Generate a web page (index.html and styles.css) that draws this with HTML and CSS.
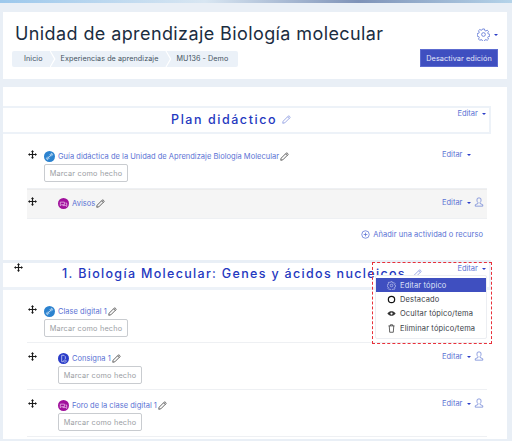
FILE: index.html
```html
<!DOCTYPE html>
<html lang="es">
<head>
  <meta charset="UTF-8" />
  <title>Unidad de aprendizaje Biología molecular</title>
  <link rel="stylesheet" href="styles.css">
</head>
<body>
  <svg class="sprites" width="0" height="0">
    <symbol id="move" viewBox="0 0 12 12"><path d="M6 0 8 2.500H6.800V5.200H9.500V4L12 6 9.500 8V6.800H6.800V9.500H8L6 12 4 9.500H5.200V6.800H2.500V8L0 6 2.500 4V5.200H5.200V2.500H4Z" fill="#1a1a1a"/></symbol>
    <symbol id="pencil" viewBox="0 0 12 12"><path d="M1.500 8.300 8.300 1.500a1 1 0 0 1 1.400 0l.8.8a1 1 0 0 1 0 1.400L3.700 10.500 1 11Z M7.500 2.500l2 2" fill="none" stroke="currentColor" stroke-width="1"/></symbol>
    <symbol id="user" viewBox="0 0 12 12"><path d="M6 1a2.500 2.500 0 0 0-2.500 2.800c0 1.300.6 2.300 1.300 3v1L1.500 9.300V11h9V9.300L7.200 7.800v-1c.7-.7 1.300-1.700 1.300-3A2.500 2.500 0 0 0 6 1Z" fill="none" stroke="#6d82d6" stroke-width=".9"/></symbol>
    <symbol id="gear" viewBox="0 0 16 16"><g fill="none" stroke="currentColor" stroke-width="1"><circle cx="8" cy="8" r="2.300"/><path d="M6.800 1.200h2.400l.4 1.900 1.300.6 1.700-1 1.600 1.700-1 1.600.6 1.300 1.900.5v2.400l-1.900.4-.6 1.300 1 1.700-1.700 1.600-1.600-1-1.300.6-.5 1.900H6.800l-.4-1.900-1.300-.6-1.700 1-1.600-1.700 1-1.600-.6-1.300-1.900-.5V6.800l1.900-.4.600-1.300-1-1.700 1.700-1.600 1.600 1 1.300-.6Z"/></g></symbol>
    <symbol id="link" viewBox="0 0 12 12"><circle cx="6" cy="6" r="6" fill="#2b82cf"/><path d="M3.500 8.500 8.500 3.500M4.500 6 3 7.500a1 1 0 0 0 1.500 1.500L6 7.500M6 4.500 7.500 3A1 1 0 0 1 9 4.500L7.500 6" fill="none" stroke="#cfe4f7" stroke-width=".9"/></symbol>
    <symbol id="forum" viewBox="0 0 12 12"><circle cx="6" cy="6" r="6" fill="#a0109c"/><path d="M2.500 4.500h4.500v2.800H4L2.500 8.500ZM5 8.300h3.500l1 .9V5.500H8" fill="none" stroke="#f0c9ef" stroke-width=".8"/></symbol>
    <symbol id="assign" viewBox="0 0 12 12"><circle cx="6" cy="6" r="6" fill="#2a3cc8"/><path d="M4 2.500h2.500L8 4v2.500M4 2.500v7h2M7.500 7.500a1.300 1.300 0 1 0 .1 0Z" fill="none" stroke="#d3d8f7" stroke-width=".8"/></symbol>
  </svg>

  <div class="top-strip"></div>

  <header class="page-header">
    <div class="header-left">
      <h1>Unidad de aprendizaje Biología molecular</h1>
      <ol class="crumbs">
        <li>Inicio</li>
        <li>Experiencias de aprendizaje</li>
        <li>MU136 - Demo</li>
      </ol>
    </div>
    <div class="header-right">
      <div class="gear-menu"><svg class="ico-gear"><use href="#gear"/></svg><i class="caret"></i></div>
      <button class="btn-edit">Desactivar edición</button>
    </div>
  </header>

  <main class="course">
    <section class="topic topic-first">
      <div class="topic-head">
        <h2>Plan didáctico <svg class="ico-pen-title"><use href="#pencil"/></svg></h2>
        <a class="edit-link">Editar <i class="caret"></i></a>
      </div>
      <ul class="activities">
        <li class="activity activity-top">
          <svg class="ico-move"><use href="#move"/></svg>
          <div class="activity-body">
            <div class="activity-name"><svg class="ico-mod"><use href="#link"/></svg><a>Guía didáctica de la Unidad de Aprendizaje Biología Molecular</a><svg class="ico-pen"><use href="#pencil"/></svg></div>
            <button class="btn-done">Marcar como hecho</button>
          </div>
          <a class="edit-link">Editar <i class="caret"></i></a>
        </li>
        <li class="activity activity-indent activity-grey">
          <svg class="ico-move"><use href="#move"/></svg>
          <div class="activity-body">
            <div class="activity-name"><svg class="ico-mod"><use href="#forum"/></svg><a>Avisos</a><svg class="ico-pen"><use href="#pencil"/></svg></div>
          </div>
          <a class="edit-link">Editar <i class="caret"></i><svg class="ico-user"><use href="#user"/></svg></a>
        </li>
      </ul>
      <a class="add-link"><svg class="ico-add" viewBox="0 0 12 12"><circle cx="6" cy="6" r="5" fill="none" stroke="#5a72d4"/><path d="M6 3.500v5M3.500 6h5" stroke="#5a72d4"/></svg>Añadir una actividad o recurso</a>
    </section>

    <section class="topic topic-second">
      <svg class="ico-move ico-move-topic"><use href="#move"/></svg>
      <div class="topic-head topic-head-second">
        <h2>1. Biología Molecular: Genes y ácidos nucleicos <svg class="ico-pen-title"><use href="#pencil"/></svg></h2>
        <a class="edit-link">Editar <i class="caret"></i></a>
      </div>
      <ul class="activities">
        <li class="activity">
          <svg class="ico-move"><use href="#move"/></svg>
          <div class="activity-body">
            <div class="activity-name"><svg class="ico-mod"><use href="#link"/></svg><a>Clase digital 1</a><svg class="ico-pen"><use href="#pencil"/></svg></div>
            <button class="btn-done">Marcar como hecho</button>
          </div>
        </li>
        <li class="activity activity-indent">
          <svg class="ico-move"><use href="#move"/></svg>
          <div class="activity-body">
            <div class="activity-name"><svg class="ico-mod"><use href="#assign"/></svg><a>Consigna 1</a><svg class="ico-pen"><use href="#pencil"/></svg></div>
            <button class="btn-done">Marcar como hecho</button>
          </div>
          <a class="edit-link">Editar <i class="caret"></i><svg class="ico-user"><use href="#user"/></svg></a>
        </li>
        <li class="activity activity-indent">
          <svg class="ico-move"><use href="#move"/></svg>
          <div class="activity-body">
            <div class="activity-name"><svg class="ico-mod"><use href="#forum"/></svg><a>Foro de la clase digital 1</a><svg class="ico-pen"><use href="#pencil"/></svg></div>
            <button class="btn-done">Marcar como hecho</button>
          </div>
          <a class="edit-link">Editar <i class="caret"></i><svg class="ico-user"><use href="#user"/></svg></a>
        </li>
      </ul>

      <div class="highlight-box"></div>
      <ul class="topic-menu">
        <li class="active"><svg class="ico-menu"><use href="#gear"/></svg>Editar tópico</li>
        <li><svg class="ico-menu" viewBox="0 0 12 12"><circle cx="6" cy="6" r="4.200" fill="none" stroke="#111" stroke-width="1.600"/></svg>Destacado</li>
        <li><svg class="ico-menu" viewBox="0 0 12 12"><path d="M.5 6C2 3.800 4 3 6 3s4 .8 5.500 3C10 8.200 8 9 6 9S2 8.200.5 6Z" fill="#333"/><circle cx="6" cy="6" r="1.500" fill="#fff"/></svg>Ocultar tópico/tema</li>
        <li><svg class="ico-menu" viewBox="0 0 12 12"><path d="M2 2.500h8M4.500 2.500V1h3v1.500M3 2.500l.6 8.500h4.800L9 2.500" fill="none" stroke="#333"/></svg>Eliminar tópico/tema</li>
      </ul>
    </section>
  </main>
</body>
</html>
```

FILE: styles.css
```css
html, body {
  margin: 0; padding: 0; height: 441px; overflow: hidden;
  background: #e9eff6; color: #1d2b3a;
  font-family: 'Inter', 'Liberation Sans', sans-serif;
}
ul, ol { list-style: none; margin: 0; padding: 0; }
a { color: #5a72d4; }
.sprites { position: absolute; }
.top-strip {
  height: 3px;
  background: linear-gradient(90deg, #9cc8ec, #d8e6f2 40%, #7f93b8 70%, #b5d4ea);
}

/* cabecera */
.page-header {
  display: flex; justify-content: space-between;
  height: 67px; margin: 9px 5px 8px 3px; padding: 0 9px;
  box-sizing: border-box; background: #fff;
}
h1 {
  margin: 11px 0 0 3px; font-size: 18px; line-height: 22px;
  font-weight: 400; letter-spacing: .4px; color: #1b2d3f; white-space: nowrap;
}
.crumbs {
  display: flex; margin-top: 6px; height: 16px; width: 226px;
  background: #ebf1f8; border-radius: 2px;
  font-size: 7.200px; line-height: 16px; color: #44525f;
}
.crumbs li { position: relative; padding-right: 18px; letter-spacing: .08px; }
.crumbs li:first-child { padding-left: 12px; }
.crumbs li:last-child { padding-right: 0; }
.crumbs li:not(:last-child)::after {
  content: ""; position: absolute; top: 0; right: 5px; width: 6px; height: 16px;
  background: #fff;
  clip-path: polygon(0 0, 20% 0, 100% 50%, 20% 100%, 0 100%, 75% 50%);
}
.header-right { display: flex; flex-direction: column; align-items: flex-end; flex: none; }
.gear-menu { display: flex; align-items: center; gap: 4px; margin-top: 16px; height: 13px; color: #5a72d4; }
.ico-gear { width: 13px; height: 13px; }
.btn-edit {
  width: 78px; height: 18px; margin-top: 8px; padding: 0;
  background: #3f4fc0; border: 1px solid #5c6bd0; color: #e6e9fa;
  font: 7.300px 'Inter', sans-serif; letter-spacing: .1px;
}
.caret {
  display: inline-block; width: 0; height: 0; vertical-align: 1px;
  border: 2.500px solid transparent; border-top-color: #2a3cc8; border-bottom: 0;
}

/* contenido */
.course {
  margin: 0 5px 0 3px; padding-top: 19px; height: 352px;
  box-sizing: border-box; background: #fff; position: relative;
}
.topic-head {
  position: relative; height: 28px; box-sizing: border-box;
  margin-right: 16px; border: 2px solid #edf2f8; border-left: 0;
  text-align: center;
}
h2 {
  margin: 0; padding-right: 30px; font-size: 12.500px; line-height: 24px;
  font-weight: 500; color: #2438c0; letter-spacing: 1.550px; white-space: nowrap;
}
.ico-pen-title { width: 9px; height: 9px; color: #7d8fdd; margin-left: 0; }
.topic-head .edit-link { position: absolute; top: 1px; right: 3px; }
.edit-link { font-size: 7.500px; line-height: 10px; white-space: nowrap; }
.edit-link .caret { margin-left: 2px; }
.ico-user { width: 10px; height: 10px; margin-left: 3px; vertical-align: -2px; }

.activities { margin: 0 20px 0 24px; }
.activity {
  display: flex; align-items: flex-start; box-sizing: border-box;
  height: 47px; padding-top: 9px; border-bottom: 1px solid #eef0f3;
}
.activity .edit-link { flex: none; width: 45px; margin: -1px 0 0 auto; }
.activity-top { height: 55px; padding-top: 16px; }
.activity-top .btn-done { margin-top: 2px; }
.activity-top .edit-link { margin-top: 0; }
.ico-move { width: 9px; height: 9px; margin: 0 7px 0 1px; flex: none; }
.activity-indent .ico-move { margin-right: 21px; }
.activity-grey { height: 30px; padding-top: 7px; background: #f5f5f5; border-top: 1px solid #ececec; }
.activity-grey .edit-link { margin-top: 0; }
.activity-name {
  display: flex; align-items: center; height: 12px;
  font-size: 7.500px; letter-spacing: .02px; white-space: nowrap;
}
.ico-mod { width: 11px; height: 11px; margin-right: 3px; flex: none; }
.ico-pen { width: 9px; height: 9px; margin-left: 1px; color: #333; flex: none; }
.btn-done {
  display: block; width: 84px; height: 18px; margin-top: 2px; padding: 0;
  background: #fff; border: 1px solid #c9ccd0; border-radius: 2px;
  color: #9a9ea3; font: 7.300px 'Inter', sans-serif; letter-spacing: .2px;
}

.add-link {
  display: block; margin: 10px 24px 0 0; text-align: right;
  font-size: 7.500px; line-height: 12px; letter-spacing: .05px;
}
.ico-add { width: 9px; height: 9px; margin-right: 3px; vertical-align: -1.500px; }

/* segundo tópico */
.topic-second { position: absolute; top: 173px; left: 0; right: 0; }
.topic-head-second { height: 30px; border-top: 3px solid #e9eff6; border-bottom: 3px solid #edf2f8; border-right: 2px solid #edf2f8; }
.topic-head-second h2 { padding: 0; text-align: left; margin-left: 59px; line-height: 22px; letter-spacing: 1.320px; }
.topic-head-second .ico-pen-title { margin-left: 2px; }
.ico-move-topic { position: absolute; top: 3px; left: 11px; margin: 0; z-index: 1; }

.topic-second .activities { margin-top: 6px; }

.highlight-box {
  position: absolute; top: 2px; left: 369px; width: 118px; height: 80px;
  border: 1px dashed #e8303a; z-index: 2;
}
.topic-menu {
  position: absolute; top: 15px; left: 372px; width: 112px; height: 64px;
  box-sizing: border-box; padding: 2px 0; background: #fff;
  border: 1px solid #eceef2; border-radius: 2px; z-index: 3;
  font-size: 7.500px; color: #3a4047; letter-spacing: .14px;
}
.topic-menu li { display: flex; align-items: center; height: 14.400px; padding-left: 11px; }
.topic-menu li.active { background: #3f4fc0; color: #dfe3f8; }
.ico-menu { width: 9px; height: 9px; margin-right: 4px; flex: none; }
```
